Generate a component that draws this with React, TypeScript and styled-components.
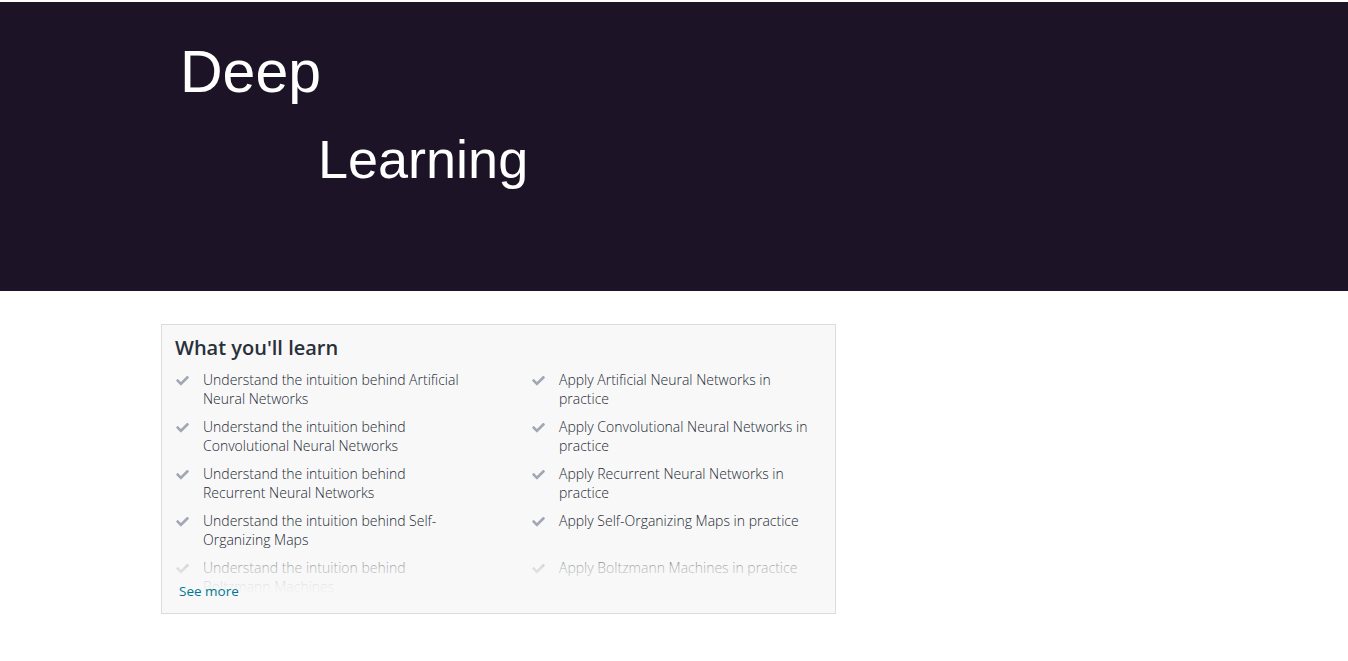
import React from "react";
import styled, { createGlobalStyle } from "styled-components";

const GlobalStyle = createGlobalStyle`
  html, body { margin: 0; padding: 0; background: #ffffff; }
  body { font-family: "Open Sans", "Liberation Sans", sans-serif; }
  * { box-sizing: border-box; }
`;

const Page = styled.div`
  padding-top: 2px;
  display: flex;
  flex-direction: column;
`;

const Hero = styled.header`
  background: #1c1326;
  height: 289px;
  padding: 27px 0 0 180px;
  display: flex;
  flex-direction: column;
`;

const HeroWord = styled.h1<{ $indent: number; $size: number }>`
  margin: 0 0 0 ${(p) => p.$indent}px;
  font-family: "Liberation Sans", Arial, sans-serif;
  font-weight: 400;
  font-size: ${(p) => p.$size}px;
  line-height: 87px;
  color: #ffffff;
`;

const Main = styled.main`
  padding: 33px 0 40px 161px;
`;

const Card = styled.section`
  width: 675px;
  background: #f8f8f8;
  border: 1px solid #dcdcdc;
  padding: 11px 14px 12px 13px;
  display: flex;
  flex-direction: column;
`;

const Title = styled.h2`
  margin: 0 0 10px 0;
  font-size: 20px;
  font-weight: 600;
  line-height: 24px;
  color: #29303b;
`;

const ListWrap = styled.div`
  position: relative;
  max-height: 226px;
  overflow: hidden;

  &::after {
    content: "";
    position: absolute;
    left: 0;
    right: 0;
    bottom: 0;
    height: 48px;
    background: linear-gradient(
      to bottom,
      rgba(248, 248, 248, 0) 0%,
      rgba(248, 248, 248, 0.65) 40%,
      rgba(248, 248, 248, 0.92) 80%,
      #f8f8f8 100%
    );
  }
`;

const List = styled.ul`
  list-style: none;
  margin: 0;
  padding: 0;
  display: grid;
  grid-template-columns: 356px 1fr;
  row-gap: 9px;
`;

const Item = styled.li`
  display: flex;
  align-items: flex-start;
  max-width: 293px;
  font-size: 14px;
  font-weight: 300;
  line-height: 19px;
  color: #242a35;
`;

const CheckBox = styled.span`
  flex: 0 0 28px;
  display: flex;
  padding: 5px 0 0 1px;
  color: #a1a7b3;
`;

const SeeMore = styled.button`
  position: relative;
  align-self: flex-start;
  margin: -14px 0 0 4px;
  padding: 0;
  border: 0;
  background: none;
  font-family: "Open Sans", "Liberation Sans", sans-serif;
  font-size: 13.5px;
  font-weight: 400;
  line-height: 19px;
  color: #007791;
  cursor: pointer;
`;

const Check = () => (
  <svg width="13" height="11" viewBox="0 30 512 440" fill="currentColor" aria-hidden="true">
    <path d="M173.898 439.404l-166.4-166.4c-9.997-9.997-9.997-26.206 0-36.204l36.203-36.204c9.997-9.998 26.207-9.998 36.204 0L192 312.69 432.095 72.596c9.997-9.997 26.207-9.997 36.204 0l36.203 36.204c9.997 9.997 9.997 26.206 0 36.204l-294.4 294.401c-9.998 9.997-26.207 9.997-36.204-.001z" />
  </svg>
);

const items: string[] = [
  "Understand the intuition behind Artificial Neural Networks",
  "Apply Artificial Neural Networks in practice",
  "Understand the intuition behind Convolutional Neural Networks",
  "Apply Convolutional Neural Networks in practice",
  "Understand the intuition behind Recurrent Neural Networks",
  "Apply Recurrent Neural Networks in practice",
  "Understand the intuition behind Self-Organizing Maps",
  "Apply Self-Organizing Maps in practice",
  "Understand the intuition behind Boltzmann Machines",
  "Apply Boltzmann Machines in practice",
];

export default function App() {
  return (
    <>
      <GlobalStyle />
      <Page>
        <Hero>
          <HeroWord $indent={0} $size={59}>Deep</HeroWord>
          <HeroWord $indent={138} $size={54}>Learning</HeroWord>
        </Hero>
        <Main>
          <Card>
            <Title>What you'll learn</Title>
            <ListWrap>
              <List>
                {items.map((t) => (
                  <Item key={t}>
                    <CheckBox>
                      <Check />
                    </CheckBox>
                    <span>{t}</span>
                  </Item>
                ))}
              </List>
            </ListWrap>
            <SeeMore type="button">See more</SeeMore>
          </Card>
        </Main>
      </Page>
    </>
  );
}
